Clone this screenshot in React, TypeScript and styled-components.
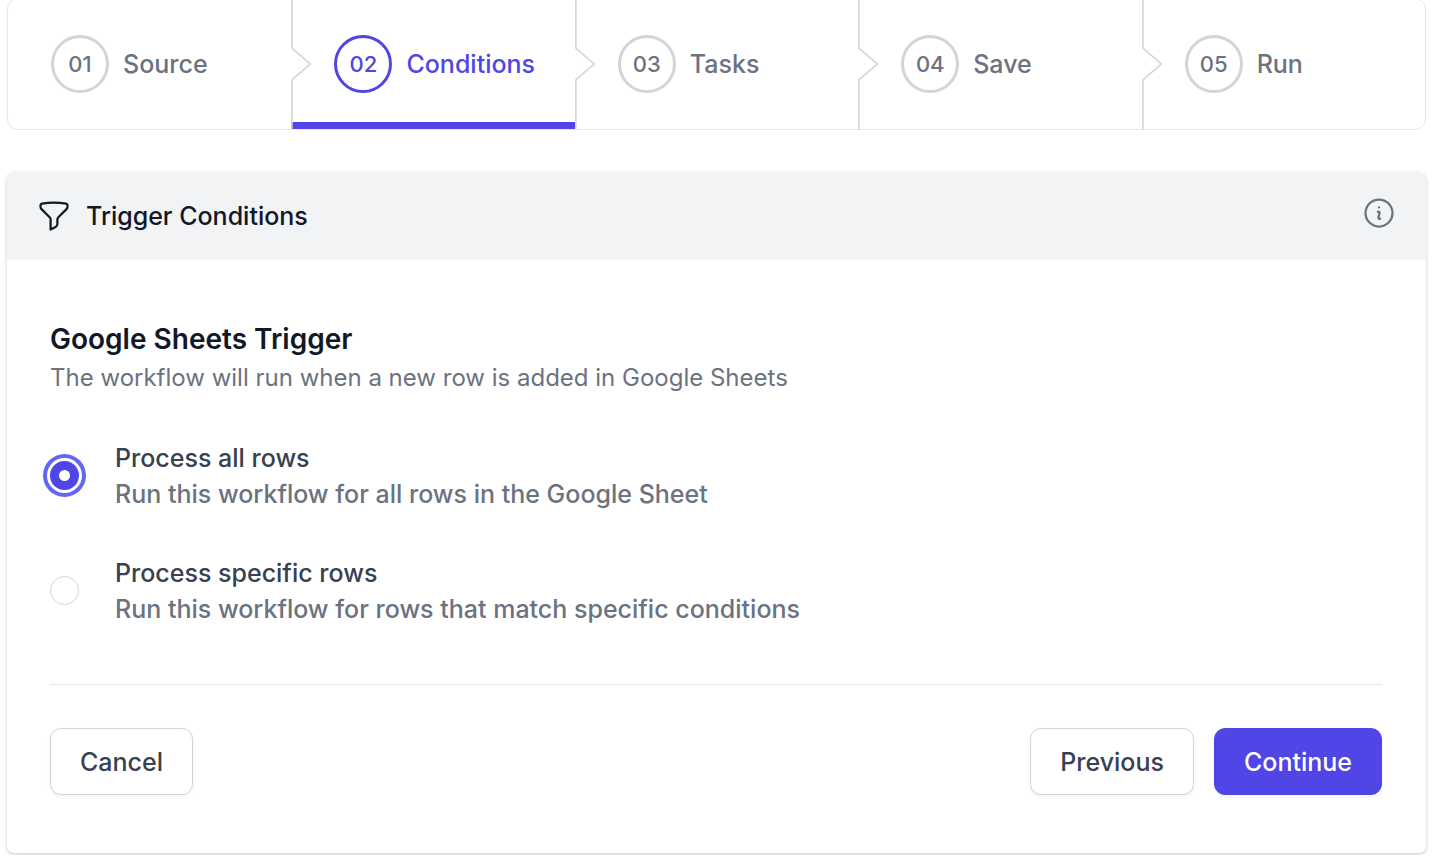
import React, { useState } from "react";
import styled, { createGlobalStyle } from "styled-components";

const color = {
  primary: "#4f46e5",
  ring: "#6366f1",
  ink: "#111827",
  strong: "#374151",
  muted: "#6b7280",
  outline: "#d1d5db",
  line: "#e5e7eb",
  header: "#f2f3f5",
};

const GlobalStyle = createGlobalStyle`
  *, *::before, *::after { box-sizing: border-box; }
  body {
    margin: 0;
    background: #fff;
    color: ${color.ink};
    font-family: Inter, "Liberation Sans", sans-serif;
    font-size: 25px;
    line-height: 36px;
    -webkit-font-smoothing: antialiased;
  }
`;

const Page = styled.div`
  display: flex;
  flex-direction: column;
  gap: 42px;
  margin-top: -2px;
  padding: 0 10px 2px 7px;
`;

const StepList = styled.ol`
  display: flex;
  margin: 0;
  padding: 0;
  list-style: none;
  border: 1px solid ${color.line};
  border-radius: 11px;
`;

const StepItem = styled.li`
  position: relative;
  flex: 1 1 0;
  min-width: 0;
`;

const StepLink = styled.a<{ $active: boolean }>`
  display: flex;
  align-items: center;
  gap: 14px;
  height: 130px;
  padding: 0 43px;
  color: ${(p) => (p.$active ? color.primary : color.muted)};
  font-weight: 500;
  text-decoration: none;
  box-shadow: ${(p) => (p.$active ? `inset 0 -7px 0 ${color.primary}` : "none")};
`;

const StepNumber = styled.span<{ $active: boolean }>`
  display: flex;
  flex: none;
  align-items: center;
  justify-content: center;
  width: 58px;
  height: 58px;
  border: 3px solid ${(p) => (p.$active ? color.primary : color.outline)};
  border-radius: 50%;
  font-size: 22px;
`;

const Separator = styled.svg`
  position: absolute;
  top: 0;
  left: 100%;
  z-index: 1;
  width: 22px;
  height: 100%;
  color: ${color.outline};
  pointer-events: none;
`;

const Card = styled.section`
  overflow: hidden;
  background: #fff;
  border-radius: 7px;
  box-shadow: 0 2px 5px rgba(0, 0, 0, 0.1), 0 1px 3px rgba(0, 0, 0, 0.12);
`;

const CardHeader = styled.header`
  display: flex;
  align-items: flex-start;
  justify-content: space-between;
  padding: 23px 29px;
  background: ${color.header};
`;

const CardTitle = styled.h1`
  display: flex;
  align-items: center;
  gap: 14px;
  min-height: 42px;
  margin: 0;
  font-size: 25px;
  font-weight: 500;
`;

const InfoButton = styled.button`
  display: flex;
  padding: 0;
  border: 0;
  background: none;
  color: ${color.muted};
  cursor: pointer;
`;

const Icon = styled.svg`
  flex: none;
  width: 36px;
  height: 36px;
  fill: none;
  stroke: currentColor;
  stroke-width: 1.5;
  stroke-linecap: round;
  stroke-linejoin: round;
`;

const CardBody = styled.form`
  padding: 58px 44px 58px 43px;
`;

const Heading = styled.h2`
  margin: 0;
  font-size: 28px;
  font-weight: 600;
  line-height: 42px;
`;

const Description = styled.p`
  margin: 0;
  color: ${color.muted};
  font-size: 24px;
`;

const Options = styled.fieldset`
  display: flex;
  flex-direction: column;
  gap: 43px;
  min-width: 0;
  margin: 44px 0 57px;
  padding: 0;
  border: 0;
`;

const Option = styled.label`
  display: flex;
  align-items: center;
  gap: 36px;
  font-weight: 500;
  cursor: pointer;
`;

const Radio = styled.input`
  appearance: none;
  flex: none;
  width: 29px;
  height: 29px;
  margin: 0 0 2px;
  border: 1px solid ${color.outline};
  border-radius: 50%;
  background: #fff;

  &:checked {
    border: 9px solid ${color.primary};
    box-shadow: 0 0 0 3px #fff, 0 0 0 7px ${color.ring};
  }
`;

const OptionText = styled.span`
  display: flex;
  flex-direction: column;
  color: ${color.strong};
`;

const OptionHint = styled.span`
  color: ${color.muted};
`;

const Actions = styled.div`
  display: flex;
  justify-content: space-between;
  padding-top: 43px;
  border-top: 1px solid ${color.line};
`;

const ActionGroup = styled.div`
  display: flex;
  gap: 20px;
`;

const Button = styled.button<{ $primary?: boolean }>`
  height: 67px;
  padding: 0 29px;
  border: 1px solid ${(p) => (p.$primary ? color.primary : color.outline)};
  border-radius: 11px;
  background: ${(p) => (p.$primary ? color.primary : "#fff")};
  box-shadow: 0 2px 4px rgba(0, 0, 0, 0.05);
  color: ${(p) => (p.$primary ? "#fff" : color.strong)};
  font: inherit;
  font-weight: 500;
  cursor: pointer;
`;

const steps = ["Source", "Conditions", "Tasks", "Save", "Run"];

const options = [
  {
    value: "all",
    label: "Process all rows",
    hint: "Run this workflow for all rows in the Google Sheet",
  },
  {
    value: "specific",
    label: "Process specific rows",
    hint: "Run this workflow for rows that match specific conditions",
  },
];

export default function App() {
  const current = 1;
  const [rows, setRows] = useState("all");

  return (
    <>
      <GlobalStyle />
      <Page>
        <nav aria-label="Progress">
          <StepList>
            {steps.map((name, i) => (
              <StepItem key={name}>
                <StepLink
                  href={`#${name.toLowerCase()}`}
                  $active={i === current}
                  aria-current={i === current ? "step" : undefined}
                >
                  <StepNumber $active={i === current}>{`0${i + 1}`}</StepNumber>
                  <span>{name}</span>
                </StepLink>
                {i < steps.length - 1 && (
                  <Separator viewBox="0 0 12 82" fill="none" preserveAspectRatio="none" aria-hidden="true">
                    <path
                      d="M0.5 0V31L10.5 41L0.5 51V82"
                      stroke="currentColor"
                      strokeWidth="1.6"
                      vectorEffect="non-scaling-stroke"
                    />
                  </Separator>
                )}
              </StepItem>
            ))}
          </StepList>
        </nav>

        <Card>
          <CardHeader>
            <CardTitle>
              <Icon viewBox="0 0 24 24" aria-hidden="true">
                <path d="M12 3c2.755 0 5.455.232 8.083.678.533.09.917.556.917 1.096v1.044a2.25 2.25 0 01-.659 1.591l-5.432 5.432a2.25 2.25 0 00-.659 1.591v2.927a2.25 2.25 0 01-1.244 2.013L9.75 21v-6.568a2.25 2.25 0 00-.659-1.591L3.659 7.409A2.25 2.25 0 013 5.818V4.774c0-.54.384-1.006.917-1.096A48.32 48.32 0 0112 3z" />
              </Icon>
              Trigger Conditions
            </CardTitle>
            <InfoButton type="button" aria-label="More information">
              <Icon viewBox="0 0 24 24" aria-hidden="true">
                <path d="M11.25 11.25l.041-.02a.75.75 0 011.063.852l-.708 2.836a.75.75 0 001.063.853l.041-.021M21 12a9 9 0 11-18 0 9 9 0 0118 0zm-9-3.75h.008v.008H12V8.25z" />
              </Icon>
            </InfoButton>
          </CardHeader>

          <CardBody onSubmit={(e) => e.preventDefault()}>
            <Heading id="trigger-heading">Google Sheets Trigger</Heading>
            <Description>The workflow will run when a new row is added in Google Sheets</Description>
            <Options aria-labelledby="trigger-heading">
              {options.map((o) => (
                <Option key={o.value}>
                  <Radio
                    type="radio"
                    name="rows"
                    value={o.value}
                    checked={rows === o.value}
                    onChange={() => setRows(o.value)}
                  />
                  <OptionText>
                    {o.label}
                    <OptionHint>{o.hint}</OptionHint>
                  </OptionText>
                </Option>
              ))}
            </Options>
            <Actions>
              <Button type="button">Cancel</Button>
              <ActionGroup>
                <Button type="button">Previous</Button>
                <Button type="submit" $primary>
                  Continue
                </Button>
              </ActionGroup>
            </Actions>
          </CardBody>
        </Card>
      </Page>
    </>
  );
}
